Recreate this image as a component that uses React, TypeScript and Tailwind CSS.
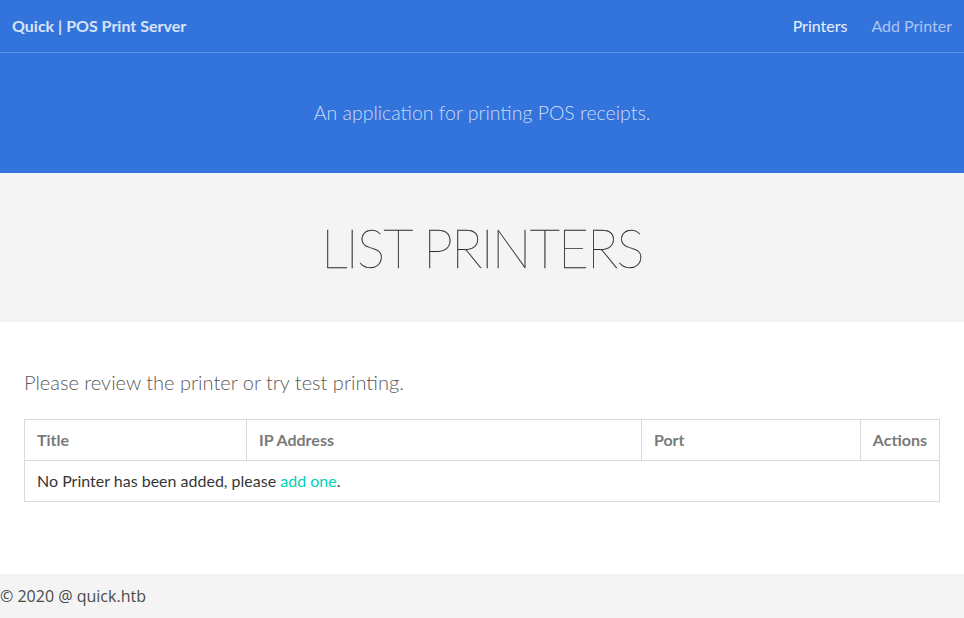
import React from "react";

export default function App() {
  const font = { fontFamily: "Lato, 'Open Sans', sans-serif" };
  return (
    <div className="min-h-[618px] flex flex-col bg-white" style={font}>
      <nav className="h-[53px] bg-[#3273dc] border-b border-[#5b8fe4] flex items-center justify-between px-3">
        <span className="text-[16px] font-bold text-white/80">Quick | POS Print Server</span>
        <div className="flex items-center gap-6 text-[16px]">
          <span className="text-white/90">Printers</span>
          <span className="text-white/60">Add Printer</span>
        </div>
      </nav>
      <div className="h-[120px] bg-[#3273dc] flex items-center justify-center">
        <p className="text-[19.5px] font-light text-white/75">An application for printing POS receipts.</p>
      </div>
      <div className="h-[149px] bg-[#f4f4f4] flex items-center justify-center">
        <h1 className="text-[53px] font-thin text-[#2a2a2a] tracking-[-1.8px] leading-none [-webkit-text-stroke:0.3px_#2a2a2a]">LIST PRINTERS</h1>
      </div>
      <div className="px-6 pt-[50px] pb-[72px]">
        <p className="text-[20px] font-light text-[#5a5a5a] leading-none">Please review the printer or try test printing.</p>
        <table className="mt-[27px] w-full border border-[#dbdbdb] border-collapse text-[16px]">
          <thead>
            <tr className="h-[41px]">
              <th className="w-[222px] border border-[#dbdbdb] text-left px-[12px] font-bold text-[#7a7a7a]">Title</th>
              <th className="w-[395px] border border-[#dbdbdb] text-left px-[12px] font-bold text-[#7a7a7a]">IP Address</th>
              <th className="w-[219px] border border-[#dbdbdb] text-left px-[12px] font-bold text-[#7a7a7a]">Port</th>
              <th className="border border-[#dbdbdb] text-left px-[12px] font-bold text-[#7a7a7a]">Actions</th>
            </tr>
          </thead>
          <tbody>
            <tr className="h-[41px]">
              <td colSpan={4} className="border border-[#dbdbdb] px-[12px] text-[#363636]">
                No Printer has been added, please <span className="text-[#00d1b2]">add one</span>.
              </td>
            </tr>
          </tbody>
        </table>
      </div>
      <footer className="mt-auto h-[44px] bg-[#f4f4f4] flex items-center text-[16px] text-[#4a4a4a]" style={{ fontFamily: "'Open Sans', sans-serif" }}>
        © 2020 @ quick.htb
      </footer>
    </div>
  );
}
